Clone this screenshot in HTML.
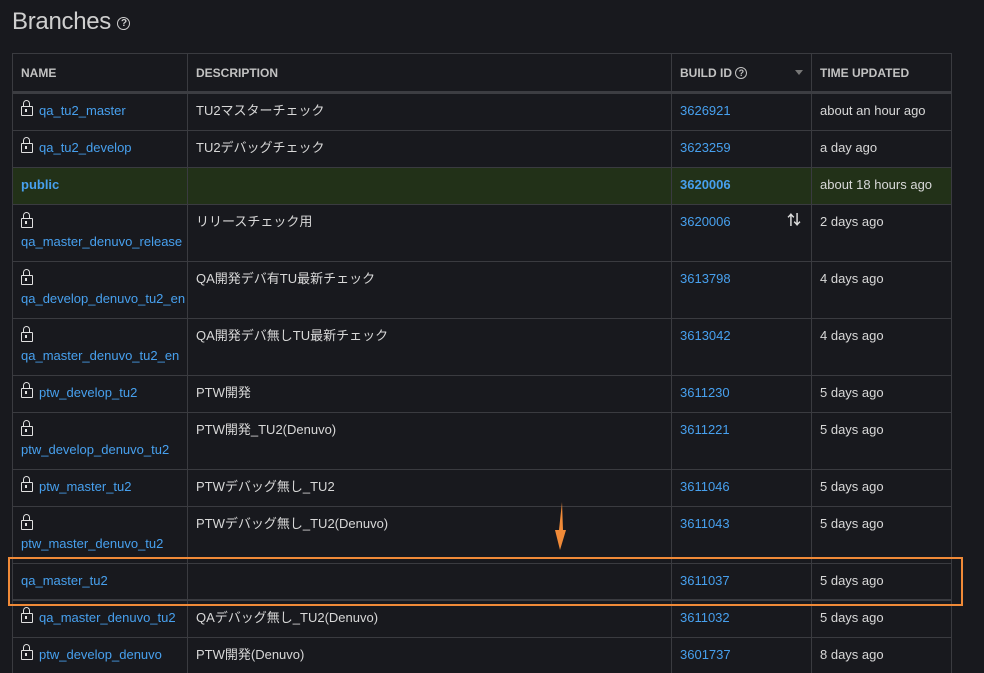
<!DOCTYPE html>
<html><head><meta charset="utf-8"><style>
html,body{margin:0;width:984px;height:673px;overflow:hidden}
body{background:#18191e;font-family:"Liberation Sans","Noto Sans CJK JP",sans-serif;color:#d8d8d8;position:relative}
h1{position:absolute;left:12px;top:7px;margin:0;font-weight:normal;font-size:24px;color:#cfcfcf;letter-spacing:-0.3px;line-height:30px}
.q{display:inline-block;width:11px;height:11px;border:1.6px solid #cfcfcf;border-radius:50%;font-size:10px;line-height:11px;text-align:center;font-weight:bold;vertical-align:3px}
.tbl{position:absolute;left:12px;top:53px;width:938px;height:620px;border-left:1px solid #3a3b40;border-right:1px solid #3a3b40;border-top:1px solid #3a3b40;box-sizing:content-box}
.r{position:absolute;left:0;width:938px;border-top:1px solid #3a3b40;box-sizing:border-box}
.c{position:absolute;top:0;bottom:0;box-sizing:border-box;padding:9px 8px 0 8px;font-size:13px;line-height:16px}
.c1{left:0;width:174px}
.c2{left:174px;width:484px;border-left:1px solid #3a3b40}
.c3{left:658px;width:140px;border-left:1px solid #3a3b40}
.c4{left:798px;width:140px;border-left:1px solid #3a3b40}
.hd .c{font-size:12px;font-weight:bold;color:#c2c2c2;padding-top:11px}
a{color:#47a0ee;text-decoration:none}
.lk{display:inline-block;width:10px;height:8px;border:1.5px solid #e0e0e0;border-radius:1px;position:relative;margin-right:6px;vertical-align:-1px}
.lk:before{content:"";position:absolute;left:1px;top:-7px;width:5px;height:5px;border:1.5px solid #e0e0e0;border-bottom:none;border-radius:4px 4px 0 0}
.lk:after{content:"";position:absolute;left:3px;top:2px;width:1.5px;height:3px;background:#e0e0e0}
.blk{display:block;margin-top:4px;margin-bottom:6px}
.pub{background:#223118}
</style></head><body>
<h1>Branches <span class="q">?</span></h1>
<div class="tbl">
<div class="r hd" style="top:0;height:38px;border-top:none"><div class="c c1">NAME</div><div class="c c2">DESCRIPTION</div><div class="c c3">BUILD ID <span class="q" style="width:10px;height:10px;line-height:10px;border-color:#c2c2c2;font-size:9px;vertical-align:1px">?</span><span style="position:absolute;right:8px;top:16px;border:4px solid transparent;border-top:5px solid #777"></span></div><div class="c c4">TIME UPDATED</div></div>
<div style="position:absolute;top:37px;left:0;width:938px;height:3px;background:#3c3d42"></div>
<div class="r" style="top:40px;height:36px;border-top:none"><div class="c c1"><span class="lk"></span><a>qa_tu2_master</a></div><div class="c c2">TU2マスターチェック</div><div class="c c3"><a>3626921</a></div><div class="c c4">about an hour ago</div></div>
<div class="r" style="top:76px;height:37px"><div class="c c1"><span class="lk"></span><a>qa_tu2_develop</a></div><div class="c c2">TU2デバッグチェック</div><div class="c c3"><a>3623259</a></div><div class="c c4">a day ago</div></div>
<div class="r pub" style="top:113px;height:37px"><div class="c c1"><a style="font-weight:bold">public</a></div><div class="c c2"></div><div class="c c3"><a style="font-weight:bold">3620006</a></div><div class="c c4">about 18 hours ago</div></div>
<div class="r" style="top:150px;height:57px"><div class="c c1"><span class="lk blk"></span><a>qa_master_denuvo_release</a></div><div class="c c2">リリースチェック用</div><div class="c c3"><a>3620006</a><span style="position:absolute;right:10px;top:7px;font-size:14px;color:#ddd;font-weight:bold">⇅</span></div><div class="c c4">2 days ago</div></div>
<div class="r" style="top:207px;height:57px"><div class="c c1"><span class="lk blk"></span><a>qa_develop_denuvo_tu2_en</a></div><div class="c c2">QA開発デバ有TU最新チェック</div><div class="c c3"><a>3613798</a></div><div class="c c4">4 days ago</div></div>
<div class="r" style="top:264px;height:57px"><div class="c c1"><span class="lk blk"></span><a>qa_master_denuvo_tu2_en</a></div><div class="c c2">QA開発デバ無しTU最新チェック</div><div class="c c3"><a>3613042</a></div><div class="c c4">4 days ago</div></div>
<div class="r" style="top:321px;height:37px"><div class="c c1"><span class="lk"></span><a>ptw_develop_tu2</a></div><div class="c c2">PTW開発</div><div class="c c3"><a>3611230</a></div><div class="c c4">5 days ago</div></div>
<div class="r" style="top:358px;height:57px"><div class="c c1"><span class="lk blk"></span><a>ptw_develop_denuvo_tu2</a></div><div class="c c2">PTW開発_TU2(Denuvo)</div><div class="c c3"><a>3611221</a></div><div class="c c4">5 days ago</div></div>
<div class="r" style="top:415px;height:37px"><div class="c c1"><span class="lk"></span><a>ptw_master_tu2</a></div><div class="c c2">PTWデバッグ無し_TU2</div><div class="c c3"><a>3611046</a></div><div class="c c4">5 days ago</div></div>
<div class="r" style="top:452px;height:57px"><div class="c c1"><span class="lk blk"></span><a>ptw_master_denuvo_tu2</a></div><div class="c c2">PTWデバッグ無し_TU2(Denuvo)</div><div class="c c3"><a>3611043</a></div><div class="c c4">5 days ago</div></div>
<div class="r" style="top:509px;height:37px;border-bottom:1px solid #3a3b40"><div class="c c1"><a>qa_master_tu2</a></div><div class="c c2"></div><div class="c c3"><a>3611037</a></div><div class="c c4">5 days ago</div></div>
<div class="r" style="top:546px;height:37px"><div class="c c1"><span class="lk"></span><a>qa_master_denuvo_tu2</a></div><div class="c c2">QAデバッグ無し_TU2(Denuvo)</div><div class="c c3"><a>3611032</a></div><div class="c c4">5 days ago</div></div>
<div class="r" style="top:583px;height:37px"><div class="c c1"><span class="lk"></span><a>ptw_develop_denuvo</a></div><div class="c c2">PTW開発(Denuvo)</div><div class="c c3"><a>3601737</a></div><div class="c c4">8 days ago</div></div>
</div>
<div style="position:absolute;left:8px;top:557px;width:951px;height:45px;border:2px solid #f08a38"></div>
<svg style="position:absolute;left:550px;top:500px" width="20" height="52"><path d="M12 2 L9 30 L5 30 L10 50 L16 30 L13 30 Z" fill="#f08a38"/></svg>
</body></html>
